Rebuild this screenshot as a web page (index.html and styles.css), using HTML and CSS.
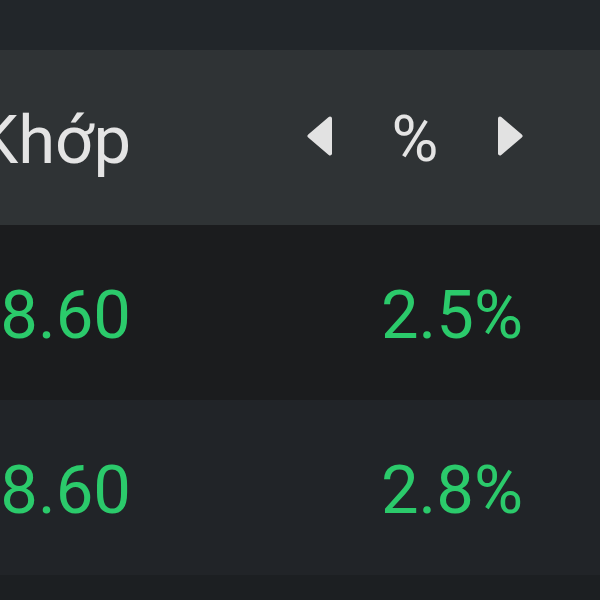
FILE: index.html
```html
<!DOCTYPE html>
<html lang="vi">
<head>
<meta charset="utf-8">
<title>Bảng giá</title>
<link rel="stylesheet" href="styles.css">
</head>
<body>
<div class="board">
  <div class="topbar"></div>
  <div class="row head">
    <div class="cell price">Khớp</div>
    <div class="spacer"></div>
    <div class="cell pct-head">
      <svg class="tri" viewBox="0 0 25 40" aria-hidden="true"><polygon points="23,2.5 2.5,20 23,37.5"/></svg>
      <span>%</span>
      <svg class="tri" viewBox="0 0 25 40" aria-hidden="true"><polygon points="2,2.5 22.5,20 2,37.5"/></svg>
    </div>
  </div>
  <div class="row odd">
    <div class="cell price up">8.60</div>
    <div class="spacer"></div>
    <div class="cell pct up">2.5%</div>
  </div>
  <div class="row even">
    <div class="cell price up">8.60</div>
    <div class="spacer"></div>
    <div class="cell pct up">2.8%</div>
  </div>
  <div class="bottombar"></div>
</div>
</body>
</html>
```
FILE: styles.css
```css
html, body {
  margin: 0;
  padding: 0;
  background: #1c1f22;
}
body {
  font-family: Roboto, "Liberation Sans", sans-serif;
  width: 600px;
  height: 600px;
  overflow: hidden;
}
.board {
  display: flex;
  flex-direction: column;
  width: 600px;
  height: 600px;
  overflow: hidden;
}
.topbar {
  height: 50px;
  background: #22262a;
}
.row {
  height: 175px;
  display: grid;
  grid-template-columns: 131px 1fr 216px;
  padding-right: 77px;
  align-items: center;
  font-size: 67px;
  line-height: 1;
  padding-top: 5px;
  box-sizing: border-box;
}
.head {
  background: #2f3335;
  color: #e4e4e4;
}
.odd {
  background: #1b1c1e;
}
.even {
  background: #212428;
}
.bottombar {
  flex: 1;
  background: #1c1f22;
}
.cell {
  display: flex;
  justify-content: flex-end;
  white-space: nowrap;
}
.up {
  color: #2bca6b;
}
.pct-head {
  justify-content: space-between;
  align-items: center;
}
.pct-head span {
  font-size: 64px;
}
.tri {
  width: 25px;
  height: 40px;
  margin-top: -8px;
}
.tri polygon {
  fill: #e2e2e2;
  stroke: #e2e2e2;
  stroke-width: 4;
  stroke-linejoin: round;
}
```
